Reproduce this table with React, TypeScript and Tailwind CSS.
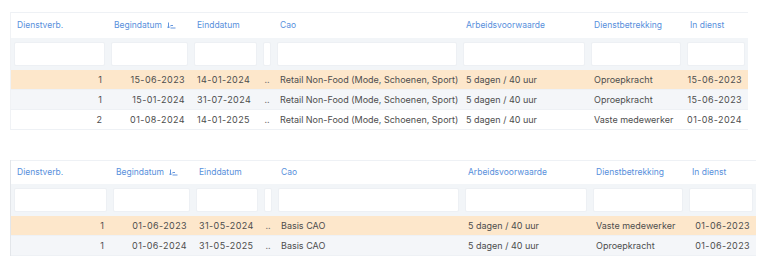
import React from "react";

type Row = {
  nr: string;
  begin: string;
  eind: string;
  cao: string;
  arbeid: string;
  dienst: string;
  inDienst: string;
};

const topRows: Row[] = [
  { nr: "1", begin: "15-06-2023", eind: "14-01-2024", cao: "Retail Non-Food (Mode, Schoenen, Sport)", arbeid: "5 dagen / 40 uur", dienst: "Oproepkracht", inDienst: "15-06-2023" },
  { nr: "1", begin: "15-01-2024", eind: "31-07-2024", cao: "Retail Non-Food (Mode, Schoenen, Sport)", arbeid: "5 dagen / 40 uur", dienst: "Oproepkracht", inDienst: "15-06-2023" },
  { nr: "2", begin: "01-08-2024", eind: "14-01-2025", cao: "Retail Non-Food (Mode, Schoenen, Sport)", arbeid: "5 dagen / 40 uur", dienst: "Vaste medewerker", inDienst: "01-08-2024" },
];

const bottomRows: Row[] = [
  { nr: "1", begin: "01-06-2023", eind: "31-05-2024", cao: "Basis CAO", arbeid: "5 dagen / 40 uur", dienst: "Vaste medewerker", inDienst: "01-06-2023" },
  { nr: "1", begin: "01-06-2024", eind: "31-05-2025", cao: "Basis CAO", arbeid: "5 dagen / 40 uur", dienst: "Oproepkracht", inDienst: "01-06-2023" },
];

const rowBg = ["bg-[#fde7cb]", "bg-[#f4f6f9]", "bg-white"];

const SortIcon = () => (
  <svg width="9" height="7" viewBox="0 0 9 7" className="ml-[5px] inline-block text-[#6496de]" fill="none" stroke="currentColor" strokeWidth="1">
    <path d="M1.5 0.5v5.5" />
    <path d="M0 4.5l1.5 1.5 1.5-1.5" />
    <path d="M3.5 3.5h2.5M3.5 6h5" />
  </svg>
);

const Table = ({ rows, cols, headerH }: { rows: Row[]; cols: string; headerH: string }) => {
  const cell = "flex items-center px-[6px] whitespace-nowrap overflow-hidden";
  return (
    <div className="border-t border-[#eef1f5]">
      <div className={`grid ${cols} ${headerH} bg-white text-[8.5px] text-[#5890dc]`}>
        <div className={cell}>Dienstverb.</div>
        <div className={cell}>
          Begindatum
          <SortIcon />
        </div>
        <div className={cell}>Einddatum</div>
        <div className={cell}></div>
        <div className={cell}>Cao</div>
        <div className={cell}>Arbeidsvoorwaarde</div>
        <div className={cell}>Dienstbetrekking</div>
        <div className={cell}>In dienst</div>
      </div>
      <div className={`grid ${cols} h-[32px] bg-[#f2f5f8]`}>
        {Array.from({ length: 8 }).map((_, i) => (
          <div key={i} className="flex items-center px-[3px]">
            <div className="h-[24px] w-full rounded-[2px] bg-white border border-[#edf0f4]" />
          </div>
        ))}
      </div>
      {rows.map((r, i) => (
        <div key={i} className={`grid ${cols} h-[20px] text-[9px] text-[#4d4d4d] ${rowBg[i]} border-b border-[#eef1f5]`}>
          <div className={`${cell} justify-end`}>{r.nr}</div>
          <div className={`${cell} justify-end tracking-[0.4px]`}>{r.begin}</div>
          <div className={`${cell} tracking-[0.4px]`}>{r.eind}</div>
          <div className={`${cell} justify-center px-0 text-[#777]`}>..</div>
          <div className={cell}>{r.cao}</div>
          <div className={cell}>{r.arbeid}</div>
          <div className={cell}>{r.dienst}</div>
          <div className={`${cell} justify-end px-[2px] tracking-[0.4px]`}>{r.inDienst}</div>
        </div>
      ))}
    </div>
  );
};

export default function App() {
  return (
    <div className="w-[768px] h-[267px] bg-white overflow-hidden" style={{ fontFamily: "Inter, 'Noto Sans', sans-serif" }}>
      <div className="ml-[10px] mt-[12px] w-[738px] border-l border-[#f0f2f5]">
        <Table
          rows={topRows}
          cols="grid-cols-[97px_83px_69px_14px_186px_128px_96px_64px]"
          headerH="h-[25px]"
        />
      </div>
      <div className="ml-[10px] mt-[30px] w-[746px] border-l border-[#e3e6ea]">
        <Table
          rows={bottomRows}
          cols="grid-cols-[99px_83px_68px_14px_187px_128px_96px_70px]"
          headerH="h-[23px]"
        />
      </div>
    </div>
  );
}
